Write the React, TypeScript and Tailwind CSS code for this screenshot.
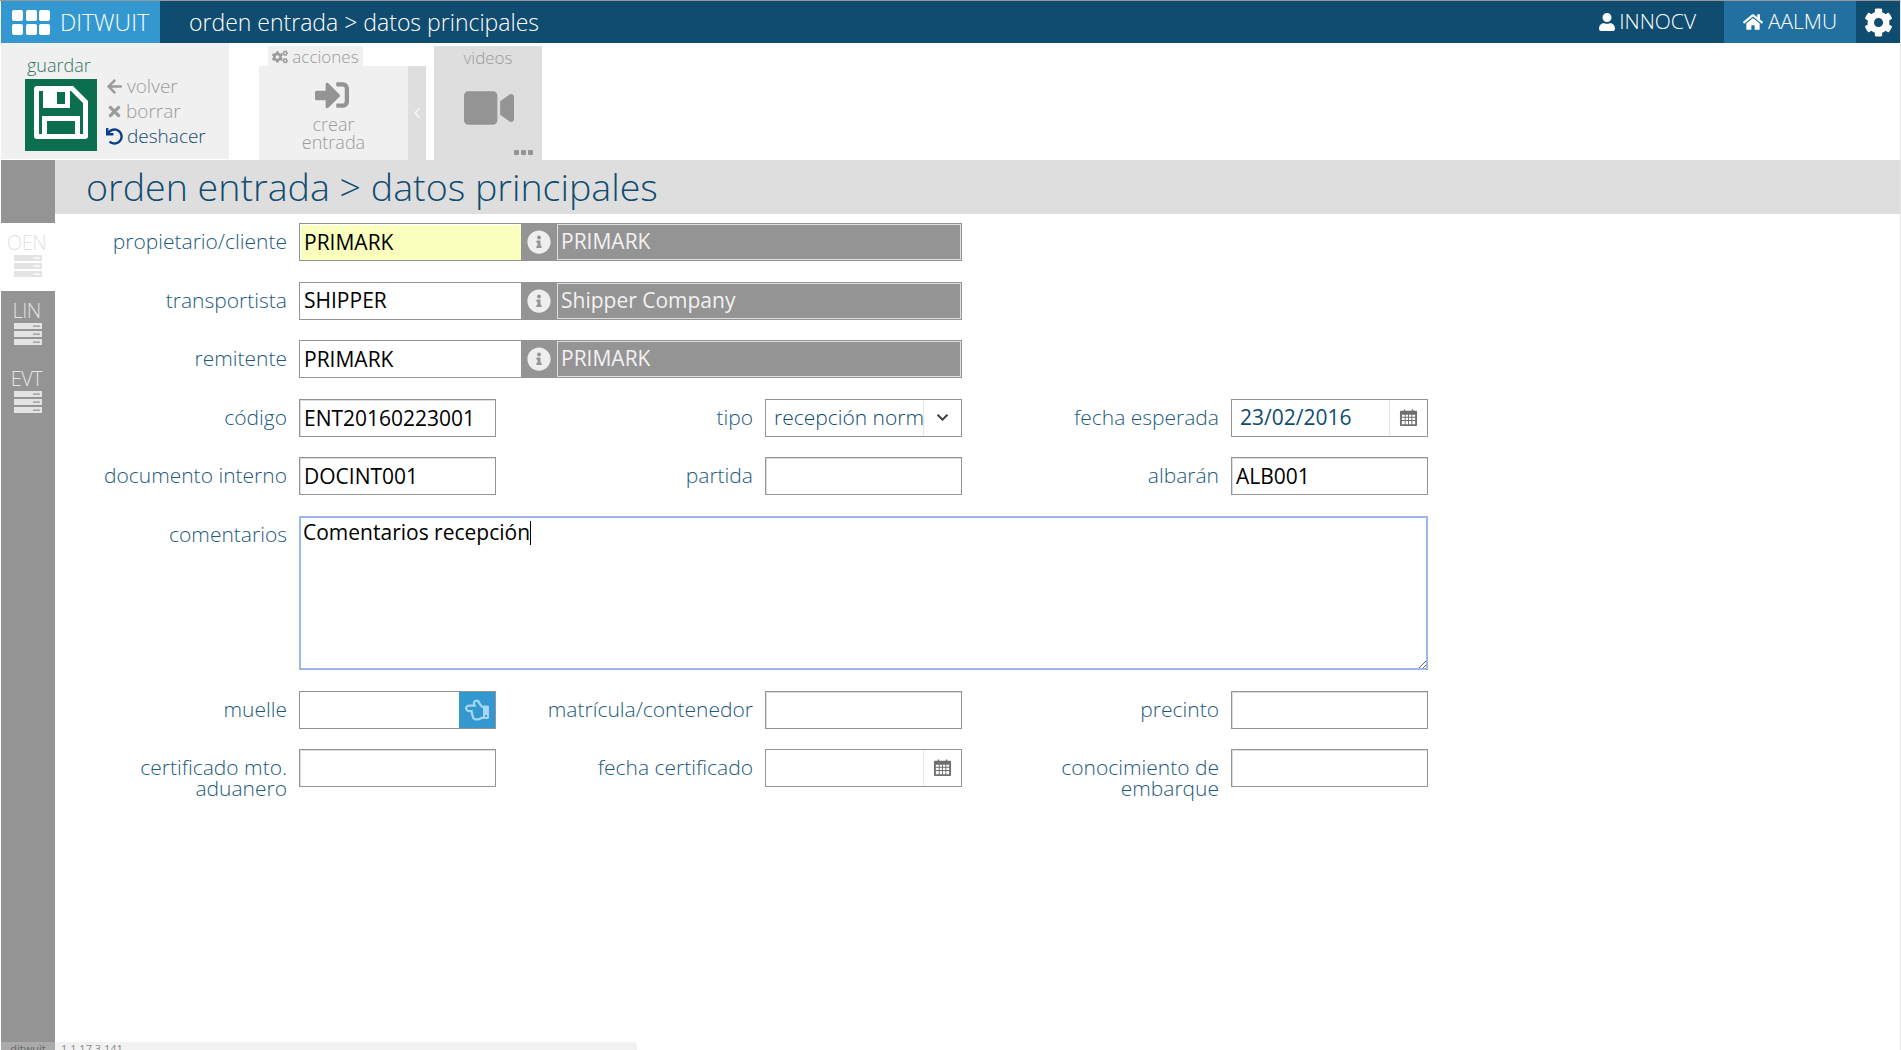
import { ReactNode } from 'react';
import {
  FaArrowLeft,
  FaTimes,
  FaUndo,
  FaCogs,
  FaSignInAlt,
  FaChevronLeft,
  FaChevronDown,
  FaVideo,
  FaUser,
  FaHome,
  FaCog,
  FaInfoCircle,
  FaRegHandPointLeft,
} from 'react-icons/fa';

function SaveIcon() {
  return (
    <svg viewBox="0 0 72 72" className="w-[72px] h-[72px] bg-[#0b6e4f]">
      <path fill="#fff" d="M12 7H48L63 22V57a3 3 0 0 1-3 3H12a3 3 0 0 1-3-3V10a3 3 0 0 1 3-3Z" />
      <path fill="#0b6e4f" d="M14 12H46L58 24V55H14Z" />
      <path fill="#fff" d="M18 7H45V29H18Z" />
      <path fill="#0b6e4f" d="M32 13H40V25H32Z" />
      <path fill="#fff" d="M17 37H55V60H17Z" />
      <path fill="#0b6e4f" d="M22 42H50V55H22Z" />
    </svg>
  );
}

function CalendarIcon() {
  return (
    <svg viewBox="0 0 20 20" className="w-[19px] h-[19px]">
      <path fill="#6f6f6f" d="M2 3h3V1.500h1.500V3h7V1.500H15V3h3a1 1 0 0 1 1 1v14a1 1 0 0 1-1 1H2a1 1 0 0 1-1-1V4a1 1 0 0 1 1-1Z" />
      <path
        fill="#fff"
        d="M3 7h3v2.300H3ZM7 7h2.500v2.300H7ZM10.500 7H13v2.300h-2.500ZM14 7h3v2.300h-3ZM3 10.300h3v2.300H3ZM7 10.300h2.500v2.300H7ZM10.500 10.300H13v2.300h-2.500ZM14 10.300h3v2.300h-3ZM3 13.600h3V17H3ZM7 13.600h2.500V17H7ZM10.500 13.600H13V17h-2.500ZM14 13.600h3V17h-3Z"
      />
    </svg>
  );
}

function ServerIcon() {
  return (
    <svg viewBox="0 0 28 22" className="w-[28px] h-[22px]">
      <path
        fill="currentColor"
        fillRule="evenodd"
        d="M0 0H28V6H0ZM19 2.500V3.800H26V2.500ZM0 8H28V14H0ZM19 10.500V11.800H26V10.500ZM0 16H28V22H0ZM19 18.500V19.800H26V18.500Z"
      />
    </svg>
  );
}

function SideItem({ code, active }: { code: string; active?: boolean }) {
  return (
    <div className={`h-[68px] flex flex-col items-center pt-[8px] ${active ? 'bg-white text-[#e3e3e3]' : 'text-[#e3e3e3]'}`}>
      <span className="-ml-[3px] text-[20px] leading-[24px] font-light tracking-[-0.5px]">{code}</span>
      <ServerIcon />
    </div>
  );
}

function Label({ width, children }: { width: string; children: ReactNode }) {
  return (
    <label className={`${width} shrink-0 pr-[12px] pt-[8px] text-right text-[21px] leading-[21px] font-light text-[#1d5a7e]`}>
      {children}
    </label>
  );
}

const boxClass = 'h-[38px] border border-[#949494] bg-white shrink-0 flex items-center text-[21px] text-black';

function TextInput({ value, className = 'w-[197px]' }: { value?: string; className?: string }) {
  return (
    <input
      readOnly
      defaultValue={value}
      className={`${boxClass} ${className} px-[4px] outline-none shadow-[inset_1px_1px_0_#dddddd]`}
    />
  );
}

function LookupRow({ label, code, name, highlight }: { label: string; code: string; name: string; highlight?: boolean }) {
  return (
    <div className="flex h-[38px]">
      <Label width="w-[244px]">{label}</Label>
      <div className="w-[663px] h-[38px] flex border border-[#949494] bg-[#949494]">
        <input
          readOnly
          defaultValue={code}
          className={`w-[221px] h-full px-[4px] pb-[1px] outline-none shadow-[inset_1px_1px_0_#ffffff] text-[21px] text-black ${highlight ? 'bg-[#fbffbd]' : 'bg-white'}`}
        />
        <div className="w-[36px] flex items-center justify-center text-[#eeeeee]">
          <FaInfoCircle size={24} />
        </div>
        <div className="flex-1 flex items-center px-[3px] border border-[#dedede] text-[21px] text-[#f2f2f2]">{name}</div>
      </div>
    </div>
  );
}

function Addon({ children, className = '' }: { children: ReactNode; className?: string }) {
  return <div className={`w-[37px] h-full shrink-0 flex items-center justify-center ${className}`}>{children}</div>;
}

export default function App() {
  return (
    <div className="w-[1901px] h-[1050px] overflow-hidden flex flex-col bg-white border-t border-[#999] border-r border-r-[#e6e6e6] pl-[1px] font-['Open_Sans',sans-serif]">
      {/* barra superior */}
      <header className="h-[42px] shrink-0 flex items-center bg-[#0f4c70] text-white">
        <div className="w-[159px] h-full flex items-center bg-[#3498d0] pl-[11px]">
          <div className="grid grid-cols-3 gap-x-[2.500px] gap-y-[3px]">
            {[0, 1, 2, 3, 4, 5].map((i) => (
              <span key={i} className="w-[11px] h-[11px] rounded-[2px] bg-white" />
            ))}
          </div>
          <span className="ml-[10px] text-[23px] font-light">DITWUIT</span>
        </div>
        <span className="ml-[29px] text-[23px] font-light">orden entrada &gt; datos principales</span>
        <div className="ml-auto h-full flex items-center">
          <div className="flex items-center mr-[28px] text-[21px] font-light">
            <FaUser size={18} className="mr-[3px]" />
            INNOCV
          </div>
          <div className="h-full w-[132px] flex items-center justify-center bg-[#22709f] text-[21px] font-light">
            <FaHome size={20} className="mr-[5px]" />
            AALMU
          </div>
          <div className="w-[44px] flex justify-center">
            <FaCog size={29} />
          </div>
        </div>
      </header>

      {/* barra de acciones */}
      <div className="h-[117px] shrink-0 flex items-stretch">
        <div className="w-[228px] h-[116px] bg-[#f0f0f0] pl-[24px] flex items-start">
          <div className="pt-[10px]">
            <div className="pl-[2px] text-[18px] leading-[24px] font-light text-[#2f7562]">guardar</div>
            <div className="mt-[2px]">
              <SaveIcon />
            </div>
          </div>
          <div className="ml-[9px] mt-[31px] flex flex-col text-[19px] leading-[25px] font-light">
            <div className="flex items-center text-[#9b9b9b]">
              <FaArrowLeft size={17} className="mr-[4px]" /> volver
            </div>
            <div className="flex items-center text-[#9b9b9b]">
              <FaTimes size={17} className="mr-[3px]" /> borrar
            </div>
            <div className="flex items-center text-[#0f4c70]">
              <FaUndo size={17} className="mr-[4px] text-[#0b3f8a]" /> deshacer
            </div>
          </div>
        </div>

        <div className="ml-[30px] w-[149px] flex flex-col pt-[3px]">
          <div className="ml-[9px] w-[95px] h-[20px] bg-[#f0f0f0] flex items-center justify-center pt-[1px] text-[17px] font-light text-[#9b9b9b] whitespace-nowrap">
            <FaCogs size={16} className="mr-[4px]" />
            acciones
          </div>
          <div className="flex-1 bg-[#f0f0f0] flex flex-col items-center pt-[12px] text-[18px] leading-[18px] font-light text-[#9b9b9b]">
            <FaSignInAlt size={34} className="mb-[3px] -ml-[3px] text-[#949494]" />
            <span>crear</span>
            <span>entrada</span>
          </div>
        </div>
        <div className="w-[18px] mt-[23px] bg-[#dedede] flex items-center justify-center text-[#f2f2f2]">
          <FaChevronLeft size={12} />
        </div>

        <div className="ml-[8px] mt-[3px] w-[108px] bg-[#dedede] flex flex-col items-center pt-[1px] text-[17px] leading-[22px] font-light text-[#9b9b9b]">
          <span>videos</span>
          <FaVideo size={50} className="mt-[14px] ml-[1px] text-[#949494]" />
          <div className="w-full flex justify-end gap-[2px] pr-[9px] mt-[17px]">
            <span className="w-[5px] h-[5px] rounded-[1px] bg-[#949494]" />
            <span className="w-[5px] h-[5px] rounded-[1px] bg-[#949494]" />
            <span className="w-[5px] h-[5px] rounded-[1px] bg-[#949494]" />
          </div>
        </div>
      </div>

      <div className="flex-1 flex min-h-0">
        {/* menu lateral */}
        <aside className="w-[54px] shrink-0 bg-[#949494] pt-[63px]">
          <SideItem code="OEN" active />
          <SideItem code="LIN" />
          <SideItem code="EVT" />
        </aside>

        <main className="flex-1 min-w-0">
          <div className="h-[54px] bg-[#dedede] pl-[31px] flex items-center text-[37.600px] font-light text-[#0f4c70]">
            orden entrada &gt; datos principales
          </div>

          <form className="pt-[9px] flex flex-col gap-[20.600px]">
            <LookupRow label="propietario/cliente" code="PRIMARK" name="PRIMARK" highlight />
            <LookupRow label="transportista" code="SHIPPER" name="Shipper Company" />
            <LookupRow label="remitente" code="PRIMARK" name="PRIMARK" />

            <div className="flex h-[38px]">
              <Label width="w-[244px]">código</Label>
              <TextInput value="ENT20160223001" />
              <Label width="w-[269px]">tipo</Label>
              <div className={`${boxClass} w-[197px]`}>
                <div className="flex-1 min-w-0 h-full flex items-center pl-[8px] overflow-hidden whitespace-nowrap font-light text-[#0f4c70] border-r border-[#e6e6e6]">
                  recepción norm
                </div>
                <Addon className="text-[#444]">
                  <FaChevronDown size={13} />
                </Addon>
              </div>
              <Label width="w-[269px]">fecha esperada</Label>
              <div className={`${boxClass} w-[197px]`}>
                <div className="flex-1 h-full flex items-center pl-[8px] text-[#0f4c70] border-r border-[#e6e6e6]">23/02/2016</div>
                <Addon>
                  <CalendarIcon />
                </Addon>
              </div>
            </div>

            <div className="flex h-[38px]">
              <Label width="w-[244px]">documento interno</Label>
              <TextInput value="DOCINT001" />
              <Label width="w-[269px]">partida</Label>
              <TextInput />
              <Label width="w-[269px]">albarán</Label>
              <TextInput value="ALB001" />
            </div>

            <div className="flex">
              <Label width="w-[244px]">comentarios</Label>
              <div className="relative w-[1129px] h-[154px]">
                <textarea
                  readOnly
                  defaultValue="Comentarios recepción"
                  className="block w-full h-full px-[3px] py-[2px] border border-[#949494] outline-2 -outline-offset-2 outline-[#9ab8ec] text-[21px] leading-[27px] text-black"
                />
                <span className="absolute left-[231px] top-[5px] w-[1px] h-[24px] bg-black" />
              </div>
            </div>

            <div className="flex h-[38px] mt-[0.500px]">
              <Label width="w-[244px]">muelle</Label>
              <div className={`${boxClass} w-[197px]`}>
                <div className="flex-1" />
                <div className="w-[36px] h-full shrink-0 flex items-center justify-center bg-[#3498d0] text-[#a6d7f3]">
                  <FaRegHandPointLeft size={24} />
                </div>
              </div>
              <Label width="w-[269px]">matrícula/contenedor</Label>
              <TextInput />
              <Label width="w-[269px]">precinto</Label>
              <TextInput />
            </div>

            <div className="flex h-[38px] -mt-[1px]">
              <Label width="w-[244px]">certificado mto. aduanero</Label>
              <TextInput />
              <Label width="w-[269px]">fecha certificado</Label>
              <div className={`${boxClass} w-[197px]`}>
                <div className="flex-1 h-full border-r border-[#e6e6e6]" />
                <Addon>
                  <CalendarIcon />
                </Addon>
              </div>
              <Label width="w-[269px]">conocimiento de embarque</Label>
              <TextInput />
            </div>
          </form>
        </main>
      </div>

      {/* pie, cortado por la ventana */}
      <footer className="h-[8px] shrink-0 flex overflow-hidden text-[11px] leading-[14px] text-[#888]">
        <div className="w-[54px] bg-[#aaaaaa] text-[#666] text-center">ditwuit</div>
        <div className="w-[582px] bg-[#f2f2f2] rounded-tr-[4px] pl-[6px]">1.1.17.3.141</div>
      </footer>
    </div>
  );
}
